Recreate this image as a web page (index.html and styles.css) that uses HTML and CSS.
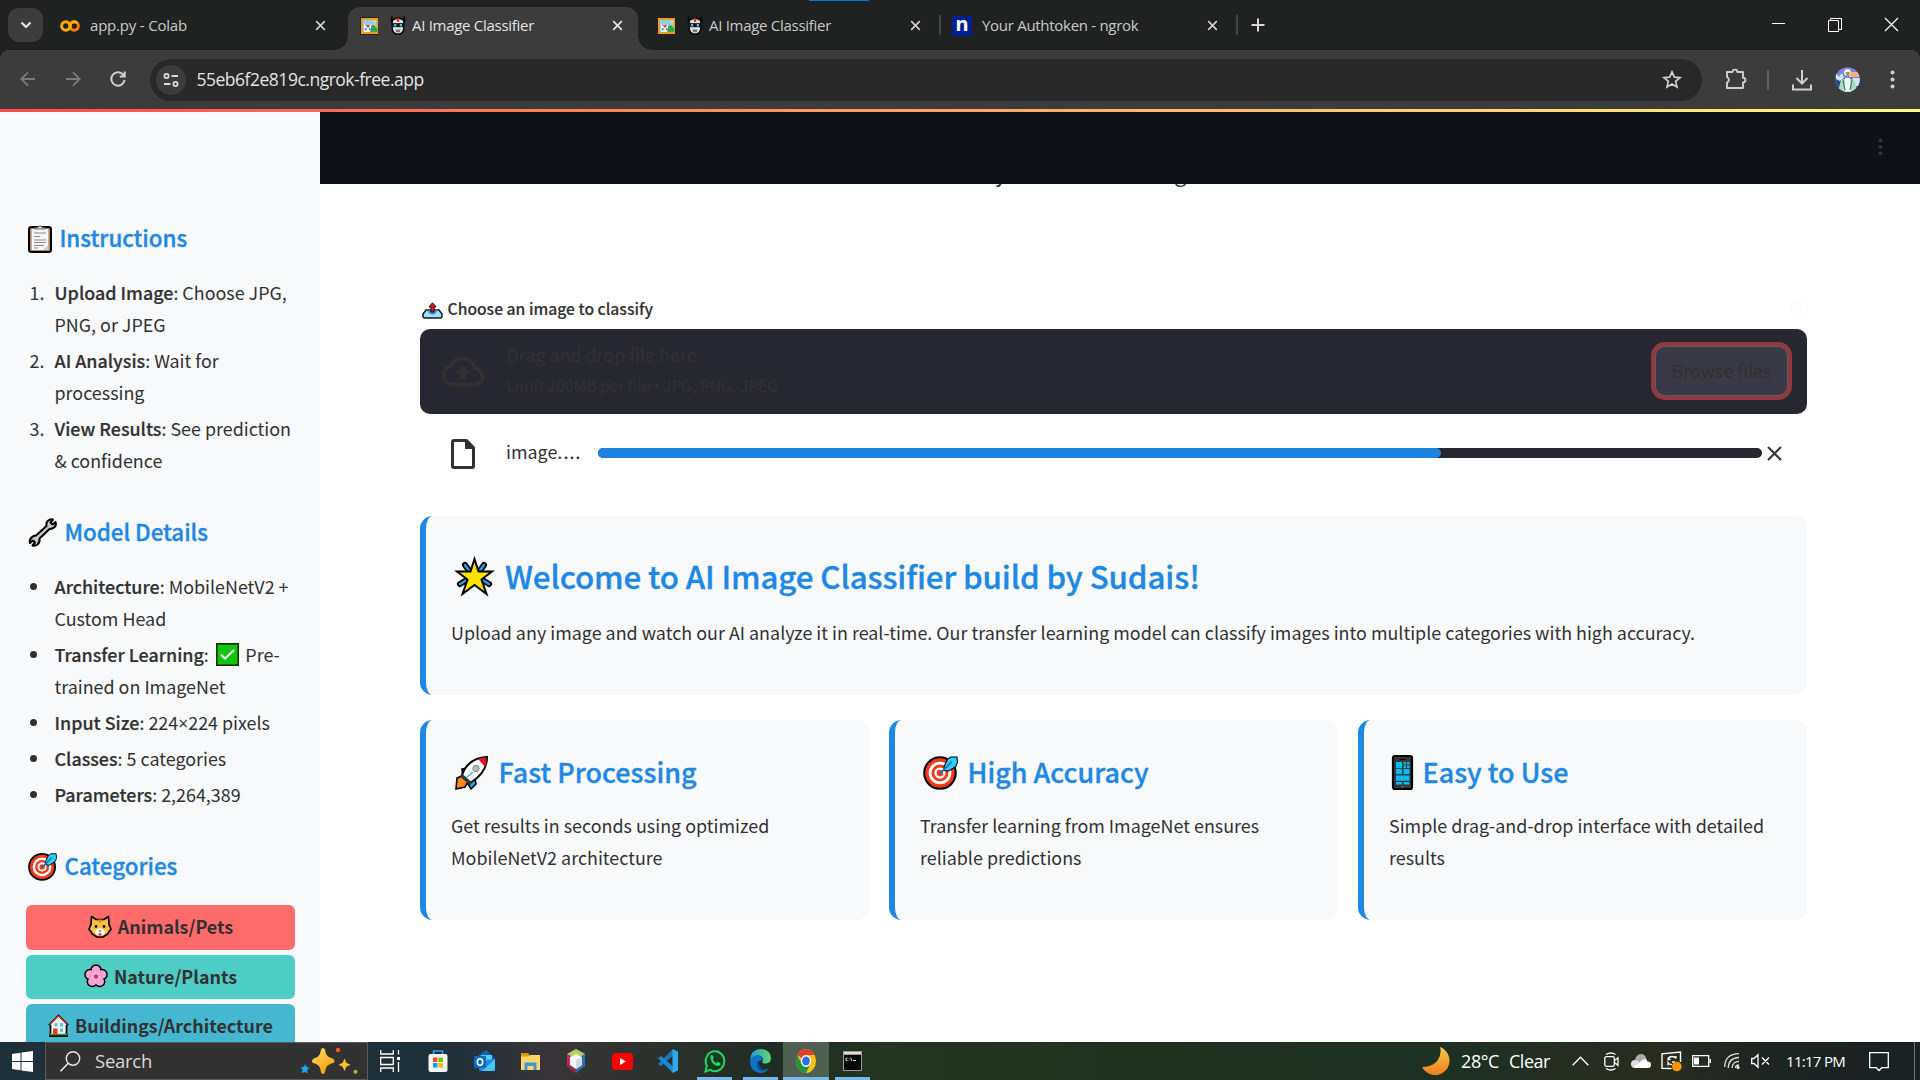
FILE: index.html
```html
<!DOCTYPE html>
<html lang="en">
<head>
<meta charset="utf-8">
<title>AI Image Classifier</title>
<link rel="stylesheet" href="styles.css">
</head>
<body>
<svg class="sprite" aria-hidden="true">
  <symbol id="i-x" viewBox="0 0 12 12"><path d="M1.3 1.3l9.4 9.4M10.7 1.3l-9.4 9.4" fill="none" stroke="currentColor" stroke-width="1.8"/></symbol>
  <symbol id="i-frame" viewBox="0 0 18 18" preserveAspectRatio="none"><rect width="18" height="18" fill="#2a200e"/><rect x="1" y="1" width="17" height="16" fill="#e8a020"/><rect x="3" y="3" width="13.500" height="12" fill="#8fd0f2"/><path d="M9 15l2-6 3-1 3.500 4v3z" fill="#36a845"/><path d="M4 15V7l2 2h3l2-2v5l-1 3z" fill="#eceff1"/><path d="M6 8h4l-1 2.500H7z" fill="#e5482d"/><path d="M5 11.500h1.500V13H5zM9 11.500h1.500V13H9z" fill="#30506b"/><circle cx="15" cy="4.500" r="1.500" fill="#ffd84d"/></symbol>
  <symbol id="i-robot" viewBox="0 0 18 20" preserveAspectRatio="none"><path d="M2 .5V7M16 .5V7" stroke="#080808" stroke-width="2.200"/><path d="M2.500 4.500Q9 0 15.500 4.500v8q0 6-6.500 6.700-6.500-.7-6.500-6.700z" fill="#e3e3e3" stroke="#080808" stroke-width="1.600"/><rect x="7.600" y="2.200" width="2.800" height="4" fill="#e0331f"/><path d="M3 7.500h12v4.300H3z" fill="#101417"/><path d="M4.500 8.300H7v2.700H4.500zM11 8.300h2.500V11H11z" fill="#31cdf2"/><path d="M6 14.200h6L11 17H7z" fill="#777"/></symbol>
  <symbol id="i-target" viewBox="0 0 34 34"><circle cx="16.500" cy="17.500" r="15.300" fill="#f03a17" stroke="#000" stroke-width="2"/><circle cx="16.500" cy="17.500" r="9.600" fill="none" stroke="#fff" stroke-width="2.800"/><circle cx="16.500" cy="17.500" r="4.300" fill="none" stroke="#fff" stroke-width="2.300"/><path d="M20.500 11L24 4l3-2h6l.500 5-1.500 4-7 4.500-4-.5z" fill="#2ccff5" stroke="#000" stroke-width="1"/><path d="M16.500 18L28 6.500" stroke="#087bb8" stroke-width="1.800"/></symbol>
</svg>

<header class="tabs">
  <div class="tab-search"><svg width="12" height="8" viewBox="0 0 12 8"><path d="M1.500 1.500L6 6l4.500-4.500" fill="none" stroke="#e3e3e3" stroke-width="2.200"/></svg></div>
  <div class="tab tab-first">
    <svg class="fav" width="20" height="14" viewBox="0 0 20 14"><circle cx="5.800" cy="7" r="4.200" fill="none" stroke="#f9ab00" stroke-width="3"/><circle cx="14.200" cy="7" r="4.200" fill="none" stroke="#f57c00" stroke-width="3"/><path d="M11.200 10a4.200 4.200 0 0 1 6-6" fill="none" stroke="#f9ab00" stroke-width="3"/></svg>
    <span class="title">app.py - Colab</span><svg class="close"><use href="#i-x"/></svg>
  </div>
  <div class="tab tab-active">
    <svg class="pic"><use href="#i-frame"/></svg><svg class="bot"><use href="#i-robot"/></svg>
    <span class="title">AI Image Classifier</span><svg class="close"><use href="#i-x"/></svg>
  </div>
  <div class="tab tab-third">
    <svg class="pic"><use href="#i-frame"/></svg><svg class="bot"><use href="#i-robot"/></svg>
    <span class="title">AI Image Classifier</span><svg class="close"><use href="#i-x"/></svg>
  </div>
  <i class="tab-sep"></i>
  <div class="tab tab-fourth">
    <span class="ngrok">n</span><span class="title">Your Authtoken - ngrok</span><svg class="close"><use href="#i-x"/></svg>
  </div>
  <i class="tab-sep"></i>
  <svg class="plus" width="14" height="14" viewBox="0 0 14 14"><path d="M7 .5v13M.5 7h13" stroke="#d6d6d6" stroke-width="2"/></svg>
  <div class="win">
    <svg width="13" height="13" viewBox="0 0 13 13"><path d="M0 5.500h13" stroke="#fff"/></svg>
    <svg width="14" height="14" viewBox="0 0 14 14"><path d="M.5 2.500h10v11H.5zM2.500 2.500v-2h11v11h-3" fill="none" stroke="#fff"/></svg>
    <svg width="13" height="13" viewBox="0 0 13 13"><path d="M0 0l13 13M13 0L0 13" stroke="#fff" stroke-width="1.200"/></svg>
  </div>
  <i class="loadline"></i>
</header>

<div class="toolbar">
  <svg class="nav" viewBox="0 0 16 16"><path d="M15 8H1.500M8 1.300L1.300 8 8 14.700" fill="none" stroke="#7b7b7b" stroke-width="1.800"/></svg>
  <svg class="nav" viewBox="0 0 16 16"><path d="M1 8h13.500M8 1.300L14.700 8 8 14.700" fill="none" stroke="#7b7b7b" stroke-width="1.800"/></svg>
  <svg class="nav" viewBox="0 0 16 16"><path d="M14.600 9A6.700 6.700 0 1 1 13 3.500l1 1.200M14.700.5v5h-5" fill="none" stroke="#d0d0d0" stroke-width="2"/></svg>
  <div class="url">
    <span class="site"><svg width="16" height="14" viewBox="0 0 16 14"><g fill="none" stroke="#dcdcdc" stroke-width="1.800"><circle cx="3.500" cy="3" r="2.100"/><path d="M8.500 3H15M1 11h6.500"/><circle cx="12.500" cy="11" r="2.100"/></g></svg></span>
    <span class="addr">55eb6f2e819c.ngrok-free.app</span>
    <svg class="star" width="20" height="19" viewBox="0 0 20 19"><path d="M10 1.900l2.300 5.200 5.700.5-4.300 3.800 1.300 5.600-5-3-5 3 1.300-5.600L2 7.600l5.700-.5z" fill="none" stroke="#cfcfcf" stroke-width="1.700"/></svg>
  </div>
  <svg class="puzzle" width="22" height="22" viewBox="0 0 22 22"><path d="M2 4h5.500a2.400 2.400 0 0 1 4.800 0H18v5.700a2.400 2.400 0 0 1 0 4.800V20H2v-5.500a2.800 2.800 0 0 0 0-5.300z" fill="none" stroke="#cfcfcf" stroke-width="1.900" stroke-linejoin="round"/></svg>
  <i class="tool-sep"></i>
  <svg class="down" width="20" height="22" viewBox="0 0 20 22"><path d="M10 1v13M4.500 9l5.500 5.500L15.500 9M1 15.500V20.500h18v-5" fill="none" stroke="#cfcfcf" stroke-width="2"/></svg>
  <svg class="avatar" width="25" height="25" viewBox="0 0 25 25"><defs><clipPath id="av"><circle cx="12.500" cy="12.500" r="12.300"/></clipPath></defs><g clip-path="url(#av)"><path fill="#7e86da" d="M0 0h25v25H0z"/><path fill="#2b4d80" d="M0 11h25v14H0z"/><path fill="#f0b27c" d="M14 5h11v5H14z"/><path fill="#d4e7f5" d="M1 6l3 4 3-4 2 5-4 3-4-2zM17 11h8v8h-5z"/><path fill="#a8dcc5" d="M3 25l3-12 6-2 7 2 4 12z"/><path fill="#eef6f4" d="M10 11h5l1 14h-6z"/><circle cx="12.500" cy="5.500" r="3.500" fill="#eff0ea"/><path fill="#b98472" d="M10.500 5h4.500l-1 4h-2.500z"/><path d="M8 13l2 10M17 13l-2 10" stroke="#2f6d68"/></g></svg>
  <svg class="dots" width="5" height="19" viewBox="0 0 5 19" fill="#cfcfcf"><circle cx="2.500" cy="2.500" r="2"/><circle cx="2.500" cy="9.500" r="2"/><circle cx="2.500" cy="16.500" r="2"/></svg>
</div>

<div class="page">
  <i class="rainbow"></i>
  <aside class="side">
    <h3><svg class="clip" width="24" height="29" viewBox="0 0 24 29"><rect x="1" y="3" width="22" height="25" rx="2.500" fill="#b58a62" stroke="#000" stroke-width="2"/><rect x="3.700" y="5" width="16.600" height="21" fill="#f6f6f6"/><path d="M20.300 21v5H15z" fill="#cfcfcf"/><path d="M7 5V3.500h2.500Q12 0 14.500 3.500H17V5z" fill="#c9c9c9" stroke="#555" stroke-width=".8"/><path d="M6 9h12M6 12.500h6M6 16h12M6 18.500h12M6 21.500h10M6 24h4" stroke="#8a8a8a" stroke-width="1"/></svg><span>Instructions</span></h3>
    <ol>
      <li><i>1.</i><p><b>Upload Image</b>: Choose JPG,<br>PNG, or JPEG</p></li>
      <li><i>2.</i><p><b>AI Analysis</b>: Wait for<br>processing</p></li>
      <li><i>3.</i><p><b>View Results</b>: See prediction<br>&amp; confidence</p></li>
    </ol>
    <h3><svg class="wrench" width="29" height="29" viewBox="0 0 29 29"><path d="M8 17.500L18.500 8q-.7-4 2.500-6 2-1.300 4-.5L22.500 4.500l2 2 3-2.500q1.200 3-.8 5t-5.200 2L11.500 20.500q.5 4-2 6-2.500 1.800-5 1l2.500-3-2-2-3 2.500q-1-3 1.500-5.500 2-2 4.500-2z" fill="#c9c9c9" stroke="#000" stroke-width="2" stroke-linejoin="round"/></svg><span>Model Details</span></h3>
    <ul>
      <li><i></i><p><b>Architecture</b>: MobileNetV2 +<br>Custom Head</p></li>
      <li><i></i><p><b>Transfer Learning</b>: <svg class="check" width="23" height="23" viewBox="0 0 23 23"><rect x=".8" y=".8" width="21.400" height="21.400" fill="#13c60d" stroke="#14300c" stroke-width="1.600"/><path d="M5 11.500l4 4.200L18 7" fill="none" stroke="#fff" stroke-width="2"/></svg> Pre-<br>trained on ImageNet</p></li>
      <li><i></i><p><b>Input Size</b>: 224<span class="times">×</span>224 pixels</p></li>
      <li><i></i><p><b>Classes</b>: 5 categories</p></li>
      <li><i></i><p><b>Parameters</b>: 2,264,389</p></li>
    </ul>
    <h3><svg class="aim" width="29" height="29"><use href="#i-target"/></svg><span>Categories</span></h3>
    <div class="cats">
      <div class="cat cat-animals"><svg width="24" height="23" viewBox="0 0 24 23"><path d="M3.500 1.500L8 4.500h8l4.500-3 .5 8 2 4.500-3.500 5L15 22H9l-4.500-3L1 14l2-4.500z" fill="#fdc23c" stroke="#000" stroke-width="1.700" stroke-linejoin="round"/><path d="M10 4.500l2 4 2-4z" fill="#d58b10"/><ellipse cx="12" cy="17" rx="5" ry="3.500" fill="#fff"/><circle cx="8" cy="11.500" r="1.400"/><circle cx="16" cy="11.500" r="1.400"/><path d="M10.500 15.500h3L12 17z" fill="#333"/><circle cx="12" cy="19.200" r="1.500" fill="#f04050"/></svg>Animals/Pets</div>
      <div class="cat cat-nature"><svg width="24" height="24" viewBox="0 0 24 24"><g stroke="#000" stroke-width="3"><circle cx="12" cy="6" r="4.300"/><circle cx="18" cy="10.500" r="4.300"/><circle cx="15.700" cy="17.500" r="4.300"/><circle cx="8.300" cy="17.500" r="4.300"/><circle cx="6" cy="10.500" r="4.300"/></g><g fill="#f7a1ce"><circle cx="12" cy="6" r="4.300"/><circle cx="18" cy="10.500" r="4.300"/><circle cx="15.700" cy="17.500" r="4.300"/><circle cx="8.300" cy="17.500" r="4.300"/><circle cx="6" cy="10.500" r="4.300"/><circle cx="12" cy="12" r="5"/></g><circle cx="12" cy="12.500" r="4" fill="none" stroke="#fff" stroke-dasharray="1.500 2"/><circle cx="12" cy="12.500" r="2" fill="#d81b78"/></svg>Nature/Plants</div>
      <div class="cat cat-buildings"><svg width="21" height="23" viewBox="0 0 21 23"><path d="M1.500 10.500L10.500 1.500l9 9-1 1V21h-16v-9.500z" fill="#f3f3f3" stroke="#000" stroke-width="1.700"/><path d="M2 10.500l8.500-8.500 8.500 8.500" fill="none" stroke="#e8432c" stroke-width="1.200"/><path d="M1 20.500h19V23H1z"/><path d="M2 20.500h17" stroke="#2aa02a" stroke-width="1.600"/><path d="M5 14.500h4.500v6H5z" fill="#e5391f"/><path d="M6.500 9h3v3.500h-3zM12 9h3v3.500h-3zM12 14.500h3V18h-3z" fill="#4fc8f0"/></svg>Buildings/Architecture</div>
    </div>
  </aside>

  <main class="main">
    <header class="apphead"><svg width="5" height="18" viewBox="0 0 5 18" fill="#313338"><circle cx="2.500" cy="2.500" r="2.100"/><circle cx="2.500" cy="9" r="2.100"/><circle cx="2.500" cy="15.500" r="2.100"/></svg></header>
    <div class="scroll">
      <p class="subtitle">Powered by Transfer Learning &amp; MobileNetV2</p>
      <div class="label">
        <svg width="21" height="17" viewBox="0 0 21 17"><path d="M4 8h13l3 4v2.500q0 1.500-1.500 1.500h-16Q1 16 1 14.500V12z" fill="#a9dcf7" stroke="#101820" stroke-width="1.500"/><path d="M6 8.500h9q-.5 4-4.500 4T6 8.500z" fill="#3c8fdd"/><path d="M10.500.8L14 5h-2v5H9V5H7z" fill="#e81224" stroke="#2a0004" stroke-width="1"/></svg>
        <span>Choose an image to classify</span>
        <svg class="help" width="18" height="18" viewBox="0 0 18 18" fill="none" stroke="#fafafa" stroke-width="1.600"><circle cx="9" cy="9" r="8"/><path d="M6.800 7Q7 4.800 9 4.800T11.200 7Q11 8.200 9 9.500v1M9 12v1.500"/></svg>
      </div>
      <section class="drop">
        <svg class="cloud" width="46" height="31" viewBox="0 0 46 31"><path d="M12 28.700a9.800 9.800 0 0 1-1.500-19 13 13 0 0 1 24.300 2.800A8.200 8.200 0 0 1 36 28.700z" fill="none" stroke="#313131" stroke-width="4"/><path d="M23 9.500l7.500 7.500H26v6h-6v-6h-4.500z" fill="#313131"/></svg>
        <div class="hint"><div class="hint-main">Drag and drop file here</div><div class="hint-sub">Limit 200MB per file <span class="bull">•</span> JPG, PNG, JPEG</div></div>
        <button class="browse">Browse files</button>
      </section>
      <div class="file">
        <svg class="doc" width="24" height="30" viewBox="0 0 24 30"><path d="M3 1.500h12.500l7 7V27q0 1.500-1.500 1.500H3Q1.500 28.500 1.500 27V3Q1.500 1.500 3 1.500z" fill="#fff" stroke="#313131" stroke-width="3"/><path d="M14 1l9 9h-9z" fill="#313131"/></svg>
        <span class="fname">image.<em>…</em></span>
        <div class="bar"><i style="width:72.4%"></i></div>
        <svg class="rm" width="15" height="15" viewBox="0 0 15 15"><path d="M1 1l13 13M14 1L1 14" stroke="#313131" stroke-width="2"/></svg>
      </div>
      <section class="card welcome">
        <h2><svg width="39" height="39" viewBox="0 0 39 39"><g stroke-linecap="round"><path d="M10 8l8 11M29 8l-8 11M5 27L15 21M34 27L24 21" stroke="#000" stroke-width="6"/><path d="M10 8l8 11M29 8l-8 11M5 27L15 21M34 27L24 21" stroke="#22a7d8" stroke-width="2.400"/></g><path d="M19.500 2l4 12.500H37L26.500 22.500l5 14.500-12-9-12 9 5-14.500L2 14.500h13.500z" fill="#ffe400" stroke="#000" stroke-width="2"/></svg><span>Welcome to AI Image Classifier build by Sudais!</span></h2>
        <p>Upload any image and watch our AI analyze it in real-time. Our transfer learning model can classify images into multiple categories with high accuracy.</p>
      </section>
      <div class="cards">
        <section class="card small">
          <h3><svg width="35" height="35" viewBox="0 0 35 35"><path d="M8 14l5-1-4 10zM21 24l1 5-5 5-3-5z" fill="#13aee5" stroke="#000" stroke-width="1.600"/><path d="M3 23l5-2 6 6-3 5-9 2z" fill="#f7891e" stroke="#000" stroke-width="1.600"/><path d="M8 20Q14 3 33 2 33 18 16 28z" fill="#fff" stroke="#000" stroke-width="2"/><path d="M24 3.800Q28 2.500 32.500 2.500 32.500 8 31 12z" fill="#e81224"/><path d="M7 20l10 9" stroke="#333" stroke-width="3.500"/><circle cx="22" cy="13.500" r="3.200" fill="#b9b9b9" stroke="#888"/><path d="M12 23l7-6" stroke="#29b6e8" stroke-width="1.600"/></svg><span>Fast Processing</span></h3>
          <p>Get results in seconds using optimized<br>MobileNetV2 architecture</p>
        </section>
        <section class="card small">
          <h3><svg width="35" height="35"><use href="#i-target"/></svg><span>High Accuracy</span></h3>
          <p>Transfer learning from ImageNet ensures<br>reliable predictions</p>
        </section>
        <section class="card small">
          <h3><svg width="21" height="35" viewBox="0 0 21 35"><rect x="1" y="1" width="19" height="33" rx="2" fill="#383838" stroke="#000" stroke-width="2.200"/><path d="M7.500 4.500h6" stroke="#000" stroke-width="1.200"/><path d="M4 7h6v6H4zM11.500 7H14v2.500h-2.500zM15 7h2.500v2.500H15zM11.500 10.500H14V13h-2.500zM15 10.500h2.500V13H15zM4 14h6v5H4zM11.500 14h6v5h-6zM4 20.500h13.500v5.200H4zM4 27h6v2.500H4zM11.500 27h6v2.500h-6z" fill="#00bcf2"/><circle cx="10.500" cy="31.700" r=".8" fill="#999"/></svg><span>Easy to Use</span></h3>
          <p>Simple drag-and-drop interface with detailed<br>results</p>
        </section>
      </div>
    </div>
  </main>
</div>

<footer class="task">
  <div class="start"><svg width="21" height="21" viewBox="0 0 21 21" fill="#fff"><path d="M0 3l8.500-1.300V10H0zM9.500 1.500L21 0v10H9.500zM0 11h8.500v8.300L0 18zM9.500 11H21v10L9.500 19.500z"/></svg></div>
  <div class="search">
    <svg width="21" height="21" viewBox="0 0 21 21"><circle cx="13" cy="7.500" r="6.700" fill="none" stroke="#e8e8e8" stroke-width="1.400"/><path d="M8.200 12.300L.5 20.300" stroke="#e8e8e8" stroke-width="1.600"/></svg>
    <span>Search</span>
    <svg class="spark" width="58" height="30" viewBox="0 0 58 30"><defs><linearGradient id="gd" x2=".6" y2="1"><stop stop-color="#ffe066"/><stop offset="1" stop-color="#f2a10c"/></linearGradient></defs><path d="M23 2q2 0 2.500 4 1 5 6 6 3 1 3 3t-3 2.500q-5 1.500-6 6Q25 28 23 28t-2.500-4.500q-1-4.500-5.500-6-3-.5-3-2.500t3-3q4.500-1 5.500-6Q21 2 23 2z" fill="url(#gd)"/><path d="M44.500 12.500l1.800 4.200 4.200 2-4.200 2-1.800 4.300-1.800-4.300-4.200-2 4.200-2z" fill="#fbc02d"/><path d="M5 18l1.500 2.800L9.500 22l-2.300 1.800.3 3.700L5 26l-3.500 1 1-3L1 21l3-.2z" fill="#1ea3ec"/><circle cx="38" cy="4" r="2.200" fill="#f05a28"/><circle cx="55.500" cy="25.800" r="2.100" fill="#8ac53e"/></svg>
  </div>
  <div class="apps">
    <div class="app view"><svg width="20" height="22" viewBox="0 0 20 22" fill="none" stroke="#fff" stroke-width="1.300"><path d="M.7 0v4h12.600V0M.7 22v-4h12.600v4M.7 7.500h12.600v7H.7zM18.500 0v4.500M18.500 12v10"/><path d="M17 8.500h3" stroke-width="3"/></svg></div>
    <div class="app"><svg width="20" height="22" viewBox="0 0 20 22"><path d="M5.500 6V1h9v5" fill="none" stroke="#28a8ea" stroke-width="1.600"/><rect x=".5" y="4" width="19" height="18" rx="2" fill="#f4f4f4"/><path fill="#f25022" d="M5 7.500h4.500V12H5z"/><path fill="#7fba00" d="M10.500 7.500H15V12h-4.500z"/><path fill="#00a4ef" d="M5 13h4.500v4.500H5z"/><path fill="#ffb900" d="M10.500 13H15v4.500h-4.500z"/></svg></div>
    <div class="app"><svg width="21" height="22" viewBox="0 0 21 22"><path d="M12 0l8 7v6H5V5z" fill="#0a63b8"/><path d="M7 5h11v9H7z" fill="#5cc6f5"/><path d="M5 11l16-2v10q0 2-2 2H7q-2 0-2-2z" fill="#1a8ee0"/><path d="M21 9L8 21h11q2 0 2-2z" fill="#46c4f6"/><rect y="6" width="12" height="12" rx="1" fill="#0f6cbd"/><ellipse cx="6" cy="12" rx="2.700" ry="3.300" fill="none" stroke="#fff" stroke-width="1.500"/></svg></div>
    <div class="app"><svg width="19" height="19" viewBox="0 0 19 19"><path d="M0 1h7l2 2.500V6H0z" fill="#d99a10"/><path d="M0 4.500h7.500L9.500 3H19v15H0z" fill="#ffd667"/><path d="M3.500 18v-7.500h12V18h-3v-4h-6v4z" fill="#3a96dd"/></svg></div>
    <div class="app"><svg width="18" height="24" viewBox="0 0 18 24"><path d="M9 0l9 5v12l-9 7-9-7V5z" fill="#2b6fb3"/><path d="M9 0l9 5-9 5-9-5z" fill="#b3cf54"/><path d="M0 5l4 2v12l-4-2z" fill="#c4265a"/><path d="M0 17l9-1v8z" fill="#9d2450"/><path d="M9 5l6 3v8l-6 4-6-4V8z" fill="#f7f7f7"/><path d="M9 11l6-3v8l-6 4z" fill="#d5dae2"/></svg></div>
    <div class="app"><svg width="21" height="17" viewBox="0 0 21 17"><rect width="21" height="17" rx="4" fill="#f00"/><path d="M8 5l6 3.500L8 12z" fill="#fff"/></svg></div>
    <div class="app"><svg width="20" height="24" viewBox="0 0 20 24"><path d="M15 0v6.500L3 17 0 15z" fill="#1479be"/><path d="M0 9l3-2 12 10.500V24z" fill="#1b8ad3"/><path d="M14.500 0L20 2.500v19L14.500 24z" fill="#2fa8f0"/></svg></div>
    <div class="app on"><svg width="21" height="24" viewBox="0 0 21 24"><path d="M1.500 22.500l1.300-5.600A9.300 10 0 1 1 6.300 20.800z" fill="#123d22" stroke="#25d366" stroke-width="2"/><path d="M6.500 7q1-1.500 2.300-.5l1 2.500-1 1.500q1.200 2.600 3.700 3.600l1.300-1.300 2.500 1.200q.5 1.500-1 2.700-1.700 1-5-1Q5.500 11.500 6.500 7z" fill="#25d366"/></svg></div>
    <div class="app on"><svg width="21" height="24" viewBox="0 0 21 24"><defs><linearGradient id="eg"><stop stop-color="#1c9de0"/><stop offset="1" stop-color="#62d96b"/></linearGradient></defs><path d="M0 11Q1 0 11 0q9.500.5 10 9 0 5-5 5.500-4 0-4-1.500 2-2 0-5Q7 4 0 11z" fill="url(#eg)"/><path d="M0 11q3-5 8-4.500 5 .5 4.500 5-5.500-.5-4.500 5 2 6.500 11 3Q15.500 24 11 24 0 23.500 0 11z" fill="#0c72c6"/><path d="M8 12q-3 6 2.500 9.500Q14 23 18 20q-9 2-10-8z" fill="#0a4b92"/></svg></div>
    <div class="app on chrome"><svg width="20" height="24" viewBox="0 0 24 24" preserveAspectRatio="none"><circle cx="12" cy="12" r="12" fill="#fbc116"/><path d="M1.600 6A12 12 0 0 1 22.400 6H12a6 6 0 0 0-5.200 3z" fill="#e33b2e"/><path d="M1.600 6A12 12 0 0 0 12 24l5.200-9A6 6 0 0 1 6.800 15z" fill="#229342"/><circle cx="12" cy="12" r="6" fill="#fff"/><circle cx="12" cy="12" r="4.600" fill="#2a72e8"/></svg></div>
    <div class="app on"><svg width="19" height="20" viewBox="0 0 19 20"><rect width="19" height="20" fill="#9a9a9a"/><path fill="#ddd" d="M1 1h17v2H1z"/><path fill="#080808" d="M1 4h17v15H1z"/><path d="M4.500 7H3v2.500h1.500M6 7.500v.5M6 9v.5M7.500 6.500l1.500 3.500M10 9.500h3" stroke="#ddd" fill="none"/></svg></div>
  </div>
  <div class="tray">
    <svg class="moon" width="28" height="29" viewBox="0 0 28 29"><defs><linearGradient id="mg" x2="0" y2="1"><stop stop-color="#f6c945"/><stop offset="1" stop-color="#ee7d1d"/></linearGradient></defs><path d="M18 0a14.500 14.500 0 1 1-18 20Q11 20 15.500 13.500T18 0z" fill="url(#mg)"/></svg>
    <span class="temp">28°C</span><span class="sky">Clear</span>
    <svg class="caret" width="17" height="10" viewBox="0 0 17 10"><path d="M.7 9.300L8.500 1.300l7.800 8" fill="none" stroke="#fff" stroke-width="1.300"/></svg>
    <svg class="meet" width="15" height="19" viewBox="0 0 15 19" fill="none" stroke="#fff" stroke-width="1.300"><rect x=".8" y="4.700" width="9.500" height="9.600" rx="1.500"/><path d="M10.500 8.500l3.500-2.700v7.500l-3.500-2.800M2 2.500q5-3 9.500 0M2 16.500q5 3 9.500 0"/></svg>
    <svg class="onedrive" width="20" height="14" viewBox="0 0 20 14"><path d="M4 6.500Q5 0 10 0q4 0 5.500 5l-5 3z" fill="#aaa"/><path d="M4 14q-4 0-4-4t4-4q2 0 3.500 1l5.500 6z" fill="#ddd"/><path d="M3 13L10 7q5-4 6.500.5 3.500 0 3.500 3.200T16.500 14H5z" fill="#fff"/></svg>
    <svg class="update" width="21" height="21" viewBox="0 0 21 21"><path d="M10.500 17.500L1 17.200V2.800L19.500 1v10" fill="none" stroke="#fff" stroke-width="1.400"/><path d="M6.500 8.500q1.500-3 4.500-3t4 2V5M6.500 8.500h3M14 11h-3M7 14.500v-3q1.500 2.500 4 2" fill="none" stroke="#fff" stroke-width="1.300"/><circle cx="15.800" cy="15.500" r="4.800" fill="#ff9500"/></svg>
    <svg class="batt" width="19" height="12" viewBox="0 0 19 12"><path d="M.7.700h16v10.600H.7z" fill="none" stroke="#fff" stroke-width="1.300"/><path fill="#fff" d="M2 2.500h5v7H2zM17.500 4H19v4h-1.500z"/></svg>
    <svg class="wifi" width="16" height="16" viewBox="0 0 16 16" fill="none" stroke="#ddd" stroke-width="1.300"><path d="M.7 14Q1 1 15 .7M4.200 15Q4.500 5 15 4.500M8 15Q8.500 8.500 15 8.300"/><path d="M11.500 15q0-3 3.500-3"/><circle cx="14" cy="14.500" r="1" fill="#fff"/></svg>
    <svg class="mute" width="19" height="14" viewBox="0 0 19 14" fill="none" stroke="#fff" stroke-width="1.300"><path d="M.7 4.500H3L7 .8v12.400L3 9.500H.7zM11 3.500l7 7M18 3.500l-7 7"/></svg>
    <span class="clock">11:17 PM</span>
    <svg class="note" width="20" height="20" viewBox="0 0 20 20"><path d="M.7.700h18.600v15h-6.500L10 18.500l-2.800-2.800H.7z" fill="none" stroke="#fff" stroke-width="1.300"/></svg>
    <i class="peek"></i>
  </div>
</footer>
</body>
</html>
```
FILE: styles.css
```css
* { box-sizing: border-box; }
body {
  margin: 0; width: 1920px; height: 1080px; overflow: hidden;
  display: flex; flex-direction: column;
  font-family: "Noto Sans CJK SC", "Open Sans", sans-serif;
  font-size: 17.9px; line-height: 32px; color: #313131; background: #fff;
}
svg { display: block; flex: none; overflow: visible; }
h2, h3, p, ol, ul { margin: 0; padding: 0; font-weight: 500; }
h2, h3 { -webkit-text-stroke: .35px currentColor; }
p { font-weight: 400; white-space: nowrap; }
i { display: block; font-style: normal; }
.sprite { position: absolute; width: 0; height: 0; overflow: hidden; }

/* Tab strip */
.tabs {
  height: 50px; flex: none; position: relative; display: flex; align-items: center;
  background: #1f2221; color: #c8cac9; font: 15px/20px "Open Sans", sans-serif;
}
.tab-search { width: 35px; height: 34px; margin-left: 8px; border-radius: 11px; background: #3c3c3c; display: grid; place-items: center; }
.tab { height: 43px; margin-top: 7px; padding-bottom: 6px; display: flex; align-items: center; white-space: nowrap; }
.title { letter-spacing: -.29px; margin-top: -2px; }
.tab .close { width: 11px; height: 11px; margin-left: auto; color: #cfcfcf; }
.tab-first { width: 272px; margin: 7px 16px 0 17px; padding-right: 6px; }
.tab-first .title { margin-left: 10px; letter-spacing: -.2px; }
.tab-active { position: relative; width: 290px; padding-left: 12px; padding-right: 15px; border-radius: 12px 12px 0 0; background: #3c3c3c; color: #e3e3e3; }
.tab-active::before, .tab-active::after { content: ""; position: absolute; bottom: 0; width: 14px; height: 14px; }
.tab-active::before { left: -14px; background: radial-gradient(circle at 0 0, transparent 13.500px, #3c3c3c 14px); }
.tab-active::after { right: -14px; background: radial-gradient(circle at 100% 0, transparent 13.500px, #3c3c3c 14px); }
.tab-active .close { color: #e6e6e6; }
.pic { width: 18px; height: 18px; }
.bot { width: 16px; height: 19px; margin: 0 6px 0 12px; }
.tab-third { width: 301px; padding-left: 19px; padding-right: 18px; }
.tab-sep { width: 2px; height: 20px; background: #454746; }
.tab-fourth { width: 295px; padding-left: 11px; padding-right: 18px; }
.ngrok { width: 20px; height: 20px; margin-right: 10px; background: #00208f; color: #fff; font: 700 20px/16px "Noto Sans", sans-serif; text-align: center; }
.plus { margin-left: 13px; }
.win { display: flex; margin-left: auto; margin-right: 22px; gap: 43px; align-items: center; }
.win svg { margin-top: -1px; }
.loadline { position: absolute; left: 809px; top: 0; width: 60px; height: 1px; background: #0078d7; }

/* Toolbar */
.toolbar {
  height: 59px; flex: none; display: flex; align-items: center;
  background:
    radial-gradient(circle at 10px 10px, #3c3c3c 10px, #1f2221 10.500px) 0 0/10px 10px no-repeat,
    radial-gradient(circle at 0 10px, #3c3c3c 10px, #1f2221 10.500px) 100% 0/10px 10px no-repeat,
    #3c3c3c;
}
.nav { width: 16px; height: 16px; margin: 0 0 2px 29px; }
.nav:first-child { margin-left: 20px; }
.url { width: 1552px; height: 42px; margin-left: 24px; padding: 0 20px 0 6px; border-radius: 21px; background: #282828; display: flex; align-items: center; }
.site { width: 30px; height: 30px; border-radius: 50%; background: #3c3c3c; display: grid; place-items: center; }
.addr { margin: -2px 0 0 10.500px; font: 17.500px/24px "Open Sans", sans-serif; letter-spacing: -.49px; color: #e3e3e3; }
.star { margin-left: auto; margin-bottom: 1px; }
.puzzle { margin: 0 0 2px 23px; }
.tool-sep { width: 2px; height: 20px; margin-left: 20px; background: #606060; }
.down { margin-left: 23px; }
.avatar { margin-left: 23px; margin-bottom: 1px; }
.dots { margin-left: 30px; }

/* Page */
.page { flex: 1; min-height: 0; position: relative; display: grid; grid-template-columns: 320px 1fr; grid-template-rows: 933px; }
.rainbow { position: absolute; z-index: 2; left: 0; right: 0; top: 0; height: 3px; background: linear-gradient(90deg, #ff4b4b, #fffd80); }
.side { background: #f8f9fb; padding: 113px 25px 0 26px; overflow: hidden; }
.side h3 { display: flex; align-items: center; gap: 7.500px; height: 30px; padding-left: 2px; font-size: 22.400px; line-height: 30px; color: #1e88e5; white-space: nowrap; }
.side h3 svg { margin-top: 2px; }
.side h3 span { letter-spacing: -.05px; }
.side ol, .side ul { list-style: none; display: flex; flex-direction: column; gap: 4px; margin: 24px 0 40px; }
.side li { display: flex; }
.side li i { width: 28.500px; flex: none; padding-left: 3.500px; font-weight: 400; }
.side ul li i::before { content: ""; display: block; width: 7px; height: 7px; margin: 13px 0 0; border-radius: 50%; background: #313131; }
.side b { font-weight: 500; -webkit-text-stroke: .2px currentColor; }
.check { display: inline-block; vertical-align: -4px; margin: 0 2.500px 0 3px; }
.times { font-family: "Open Sans", sans-serif; font-size: 17.500px; line-height: 0; }
.cats { display: flex; flex-direction: column; gap: 5px; margin-top: 25px; }
.cat { height: 44.500px; padding-bottom: 2px; border-radius: 6px; display: flex; justify-content: center; align-items: center; gap: 6px; font-weight: 700; }
.cat-animals { background: #ff6b6b; }
.cat-nature { background: #4ecdc4; }
.cat-buildings { background: #45b7d1; }

.main { min-width: 0; display: flex; flex-direction: column; overflow: hidden; }
.apphead { height: 75px; flex: none; background: #0e1117; display: flex; justify-content: flex-end; padding: 29px 37px 0 0; }
.scroll { flex: 1; overflow: hidden; padding: 0 113px 0 100px; }
.subtitle { height: 36px; margin: -29.500px 0 104.500px; font-size: 21.600px; line-height: 36px; text-align: center; }
.label { display: flex; align-items: center; height: 26px; padding-left: 2px; font-size: 15.700px; font-weight: 500; line-height: 26px; }
.label > svg:first-child { margin: 5px 4.500px 0 0; }
.label span { margin-top: 2px; -webkit-text-stroke: .15px currentColor; }
.help { margin-left: auto; margin-right: -1px; }
.drop { height: 85px; margin-top: 8px; padding: 0 19px 0 20px; border-radius: 10px; background: #262730; display: flex; align-items: center; }
.hint { margin-left: 20.500px; white-space: nowrap; }
.hint-main { line-height: 32px; margin-top: -6px; }
.hint-sub { line-height: 26px; font-size: 15.700px; margin-top: 3px; letter-spacing: -.03px; }
.bull { font-family: "Open Sans", sans-serif; line-height: 0; }
.browse { margin: -1px 0 0 auto; width: 133px; height: 50px; padding: 0 0 2px; border: 1px solid #5c5d65; border-radius: 10px; outline: 0; box-shadow: 0 0 0 4px #93393e; background: #3a3a46; color: #313131; font: inherit; white-space: nowrap; }
.file { display: flex; align-items: center; height: 40px; margin-top: 19px; padding: 0 25px 0 31px; }
.doc { margin-top: 2px; }
.fname { width: 92px; margin: -5px 0 0 31px; }
.fname em { font-style: normal; font-family: "Open Sans", sans-serif; font-size: 20px; line-height: 0; letter-spacing: 0; display: inline-block; transform: scaleX(1.15); transform-origin: 0 50%; margin-left: 1px; }
.bar { flex: 1; height: 10px; border-radius: 5px; background: #262730; overflow: hidden; }
.bar i { height: 10px; border-radius: 5px; background: #1c83e1; }
.rm { margin-left: 5px; }

.card { border-left: 6px solid #1e88e5; border-radius: 12.500px; background: #f8f9fb; padding-left: 25px; }
.card h2, .card h3 { display: flex; align-items: center; height: 40px; line-height: 40px; color: #1e88e5; white-space: nowrap; }
.card svg { margin: 0 11px 0 4px; }
.card p { letter-spacing: .01px; }
.welcome { height: 179px; margin-top: 43px; padding-top: 38px; }
.welcome h2 { font-size: 31.300px; letter-spacing: -.12px; margin-bottom: 22px; }
.welcome h2 svg { margin-top: 5px; }
.welcome h2 span { margin-top: 4px; }
.cards { display: grid; grid-template-columns: repeat(3, 1fr); gap: 20px; margin-top: 25px; }
.small { height: 200px; padding-top: 31px; }
.small h3 { font-size: 26.900px; letter-spacing: .03px; margin-bottom: 18px; }
.small h3 svg { margin: 3px 9.500px 0 3px; }
.small h3 span { margin-top: 2px; }

/* Taskbar */
.task { height: 38px; flex: none; display: flex; color: #fff; font-family: "Open Sans", sans-serif; background: linear-gradient(90deg, #20303a 0, #1f2f38 450px, #393539 550px, #29302a 680px, #1e2c24 790px, #23351f 880px, #1f301f 1200px, #1d3022 1450px, #292c1f 1660px, #1c2522 1780px, #1a2122 1920px); }
.start { width: 45px; display: grid; place-items: center; }
.search { width: 323px; border: 1px solid #5b5b5b; background: #323232; display: flex; align-items: center; padding: 0 9px 0 14px; font-size: 18.500px; letter-spacing: -.25px; color: #d8d8d8; }
.search span { margin-left: 14px; }
.spark { margin-left: auto; }
.apps { display: flex; }
.app { width: 46px; position: relative; display: grid; place-items: center; }
.app.view { width: 47px; padding-right: 4px; }
.app.on::after { content: ""; position: absolute; left: 6px; bottom: 0; width: 35px; height: 3px; background: #76b9ed; }
.app.chrome { background: #4f5f50; }
.app.chrome::after { left: 0; width: 46px; }
.tray { flex: 1; display: flex; align-items: center; white-space: nowrap; }
.moon { margin-left: 547px; }
.temp { margin-left: 11px; font-size: 18px; letter-spacing: -.4px; width: 48px; }
.sky { font-size: 18px; letter-spacing: -.5px; width: 63px; }
.meet { margin-left: 15px; }
.onedrive { margin-left: 12px; }
.update { margin-left: 10px; }
.batt { margin-left: 10px; }
.wifi { margin-left: 13px; }
.mute { margin-left: 11px; }
.clock { width: 83px; margin-left: 16px; font-size: 15px; letter-spacing: -.7px; }
.note { margin-top: 1px; }
.peek { width: 1px; height: 38px; margin-left: 25px; background: #6b7272; }
```
